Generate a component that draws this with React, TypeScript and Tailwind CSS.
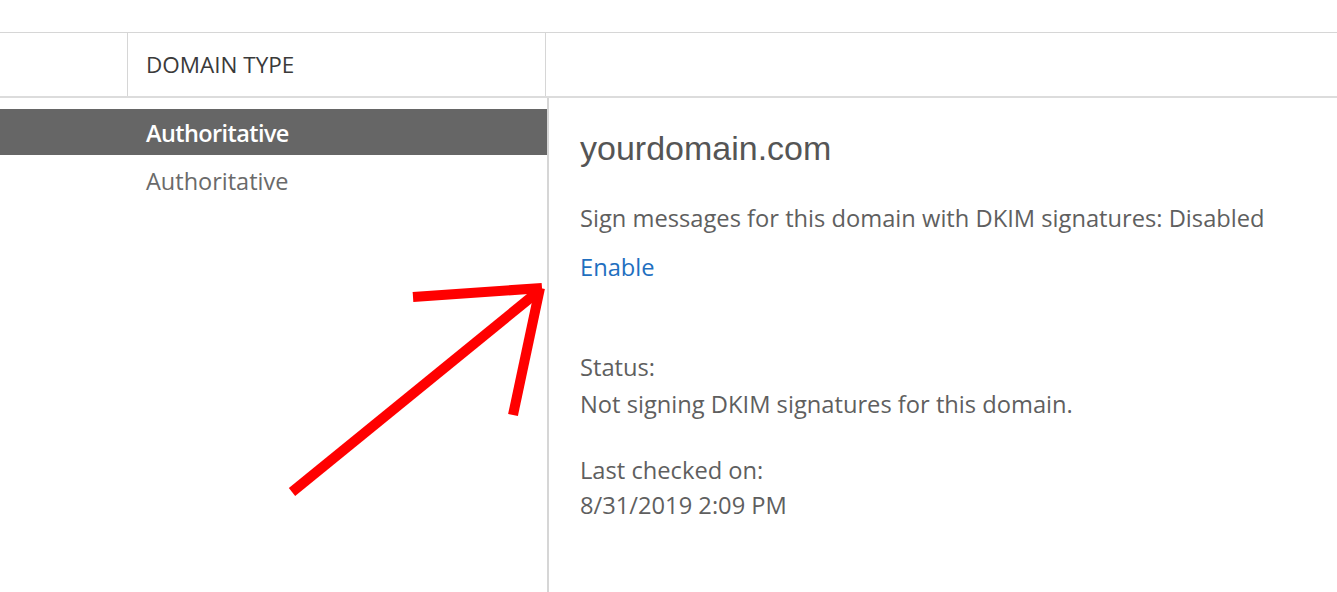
import React from 'react';

const font = { fontFamily: '"Open Sans", "Noto Sans", sans-serif' };

const RedArrow = () => (
  <svg
    className="absolute left-0 top-0 pointer-events-none"
    width="1337"
    height="592"
    viewBox="0 0 1337 592"
  >
    <g stroke="#ff0000" strokeWidth="10" strokeLinecap="butt" fill="none">
      <line x1="292" y1="492" x2="540" y2="290" />
      <line x1="413" y1="297" x2="542" y2="288" />
      <line x1="540" y1="288" x2="513" y2="415" />
    </g>
  </svg>
);

const App = () => {
  return (
    <div
      className="relative w-[1337px] h-[592px] bg-white overflow-hidden text-[#5f5f5f]"
      style={font}
    >
      {/* top strip */}
      <div className="h-[33px] border-b border-[#d6d6d6]" />

      {/* column header */}
      <div className="flex h-[65px] border-b-2 border-[#dcdcdc]">
        <div className="w-[128px] border-r border-[#d6d6d6]" />
        <div className="w-[418px] border-r border-[#d6d6d6] flex items-center pl-[18px]">
          <span className="text-[22.5px] text-[#3a3a3a]">DOMAIN TYPE</span>
        </div>
        <div className="flex-1" />
      </div>

      <div className="flex h-[494px]">
        {/* list */}
        <div className="w-[547px] pt-[11px]">
          <div className="h-[46px] bg-[#666666] flex items-center pl-[146px] pt-[3px]">
            <span className="text-[23.5px] font-semibold text-white tracking-[-0.6px]">Authoritative</span>
          </div>
          <div className="h-[46px] flex items-center pl-[146px] pt-[8px]">
            <span className="text-[23.5px] text-[#6a6a6a]">Authoritative</span>
          </div>
        </div>

        {/* details */}
        <div className="flex-1 border-l-2 border-[#d6d6d6] pl-[31px] pt-[30px]">
          <div
            className="text-[34px] leading-[40px] text-[#555555]"
            style={{ fontFamily: '"Liberation Sans", Arial, sans-serif' }}
          >
            yourdomain.com
          </div>
          <div className="mt-[32px] text-[23.7px] leading-[36px]">
            Sign messages for this domain with DKIM signatures: Disabled
          </div>
          <div className="mt-[13px] text-[23.7px] leading-[36px] text-[#1f6fbf]">Enable</div>
          <div className="mt-[64px] text-[23.7px] leading-[37px]">Status:</div>
          <div className="text-[23.7px] leading-[37px]">Not signing DKIM signatures for this domain.</div>
          <div className="mt-[30px] text-[23.7px] leading-[35px]">Last checked on:</div>
          <div className="text-[23.7px] leading-[35px]">8/31/2019 2:09 PM</div>
        </div>
      </div>

      <RedArrow />
    </div>
  );
};

export default App;
